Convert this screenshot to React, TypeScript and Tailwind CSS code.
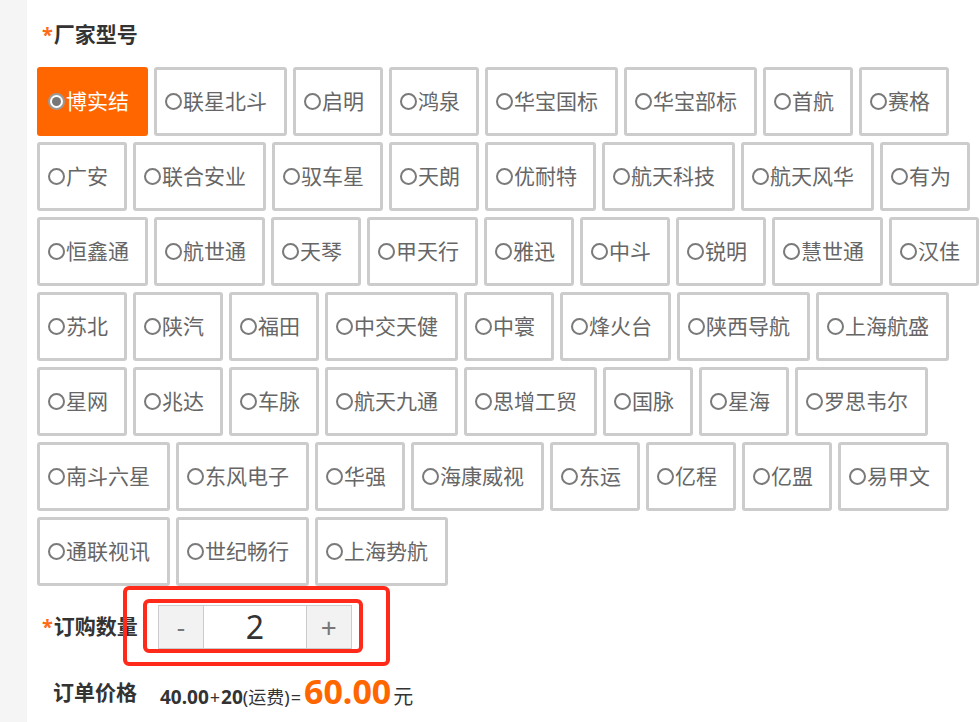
import React from "react";

const rows: string[] = [
  "博实结", "联星北斗", "启明", "鸿泉", "华宝国标", "华宝部标", "首航", "赛格",
  "广安", "联合安业", "驭车星", "天朗", "优耐特", "航天科技", "航天风华", "有为",
  "恒鑫通", "航世通", "天琴", "甲天行", "雅迅", "中斗", "锐明", "慧世通", "汉佳",
  "苏北", "陕汽", "福田", "中交天健", "中寰", "烽火台", "陕西导航", "上海航盛",
  "星网", "兆达", "车脉", "航天九通", "思增工贸", "国脉", "星海", "罗思韦尔",
  "南斗六星", "东风电子", "华强", "海康威视", "东运", "亿程", "亿盟", "易甲文",
  "通联视讯", "世纪畅行", "上海势航",
];

const widthFor = (n: number) =>
  n <= 2 ? "w-[90px]" : n === 3 ? "w-[111px]" : "w-[133px]";

function Option({ label, selected }: { label: string; selected: boolean }) {
  return (
    <div
      className={
        "h-[69px] shrink-0 flex items-center pl-[8px] rounded-[3px] border-[3px] " +
        widthFor(label.length) +
        (selected
          ? " bg-[#ff6600] border-[#ff6600] text-white"
          : " bg-white border-[#cccccc] text-[#666666]")
      }
    >
      {selected ? (
        <span className="w-[17px] h-[17px] rounded-full border-2 border-[#9a9a9a] bg-white flex items-center justify-center shrink-0 mr-[1px]">
          <span className="w-[9px] h-[9px] rounded-full bg-[#777777]" />
        </span>
      ) : (
        <span className="w-[17px] h-[17px] rounded-full border-2 border-[#7a7a7a] shrink-0 mr-[1px]" />
      )}
      <span className="text-[21px] leading-none whitespace-nowrap">{label}</span>
    </div>
  );
}

export default function App() {
  return (
    <div
      className="w-full min-h-[722px] flex bg-white overflow-hidden"
      style={{ fontFamily: '"Noto Sans", "Noto Sans CJK SC", sans-serif' }}
    >
      <div className="w-[27px] shrink-0 bg-[#f5f5f5]" />
      <div className="pl-[10px] pt-[20px] w-[1000px] shrink-0">
        <div className="pl-[5px] h-[30px] flex items-center text-[21px] font-bold text-[#333333]">
          <span className="text-[#ff6a1a] text-[20px] font-bold mr-[1px]">*</span>
          厂家型号
        </div>
        <div className="mt-[17px] flex flex-wrap gap-[6px]">
          {rows.map((r, i) => (
            <Option key={r} label={r} selected={i === 0} />
          ))}
        </div>
        <div className="mt-[19px] flex items-center">
          <div className="pl-[5px] flex items-center text-[21px] font-bold text-[#333333]">
            <span className="text-[#ff6a1a] text-[20px] font-bold mr-[1px]">*</span>
            订购数量
          </div>
          <div className="relative ml-[20px]">
            <div className="flex h-[44px] w-[194px] border border-[#cccccc]">
              <div className="w-[44px] bg-[#f2f2f2] flex items-center justify-center text-[26px] text-[#777777]">
                -
              </div>
              <div className="flex-1 bg-white border-x border-[#cccccc] flex items-center justify-center text-[32px] text-[#333333]">
                2
              </div>
              <div className="w-[44px] bg-[#f2f2f2] flex items-center justify-center text-[28px] text-[#777777]">
                +
              </div>
            </div>
            <div className="absolute left-[-35px] top-[-19px] w-[267px] h-[80px] border-4 border-[#ff2a1a] rounded-[6px] pointer-events-none" />
            <div className="absolute left-[-15px] top-[-6px] w-[220px] h-[54px] border-4 border-[#ff2a1a] rounded-[6px] pointer-events-none" />
          </div>
        </div>
        <div className="mt-[24px] h-[40px] flex items-center">
          <div className="pl-[16px] text-[21px] font-bold text-[#333333]">订单价格</div>
          <div className="ml-[23px] flex items-baseline text-[#333333]">
            <span className="text-[19px] font-bold">40.00</span>
            <span className="text-[18px] mx-[1px]">+</span>
            <span className="text-[19px] font-bold">20</span>
            <span className="text-[18px]">(运费)</span>
            <span className="text-[18px] mx-[1px]">=</span>
            <span className="text-[34px] font-bold text-[#ff6600] ml-[2px] leading-none">60.00</span>
            <span className="text-[20px] ml-[2px]">元</span>
          </div>
        </div>
      </div>
    </div>
  );
}
